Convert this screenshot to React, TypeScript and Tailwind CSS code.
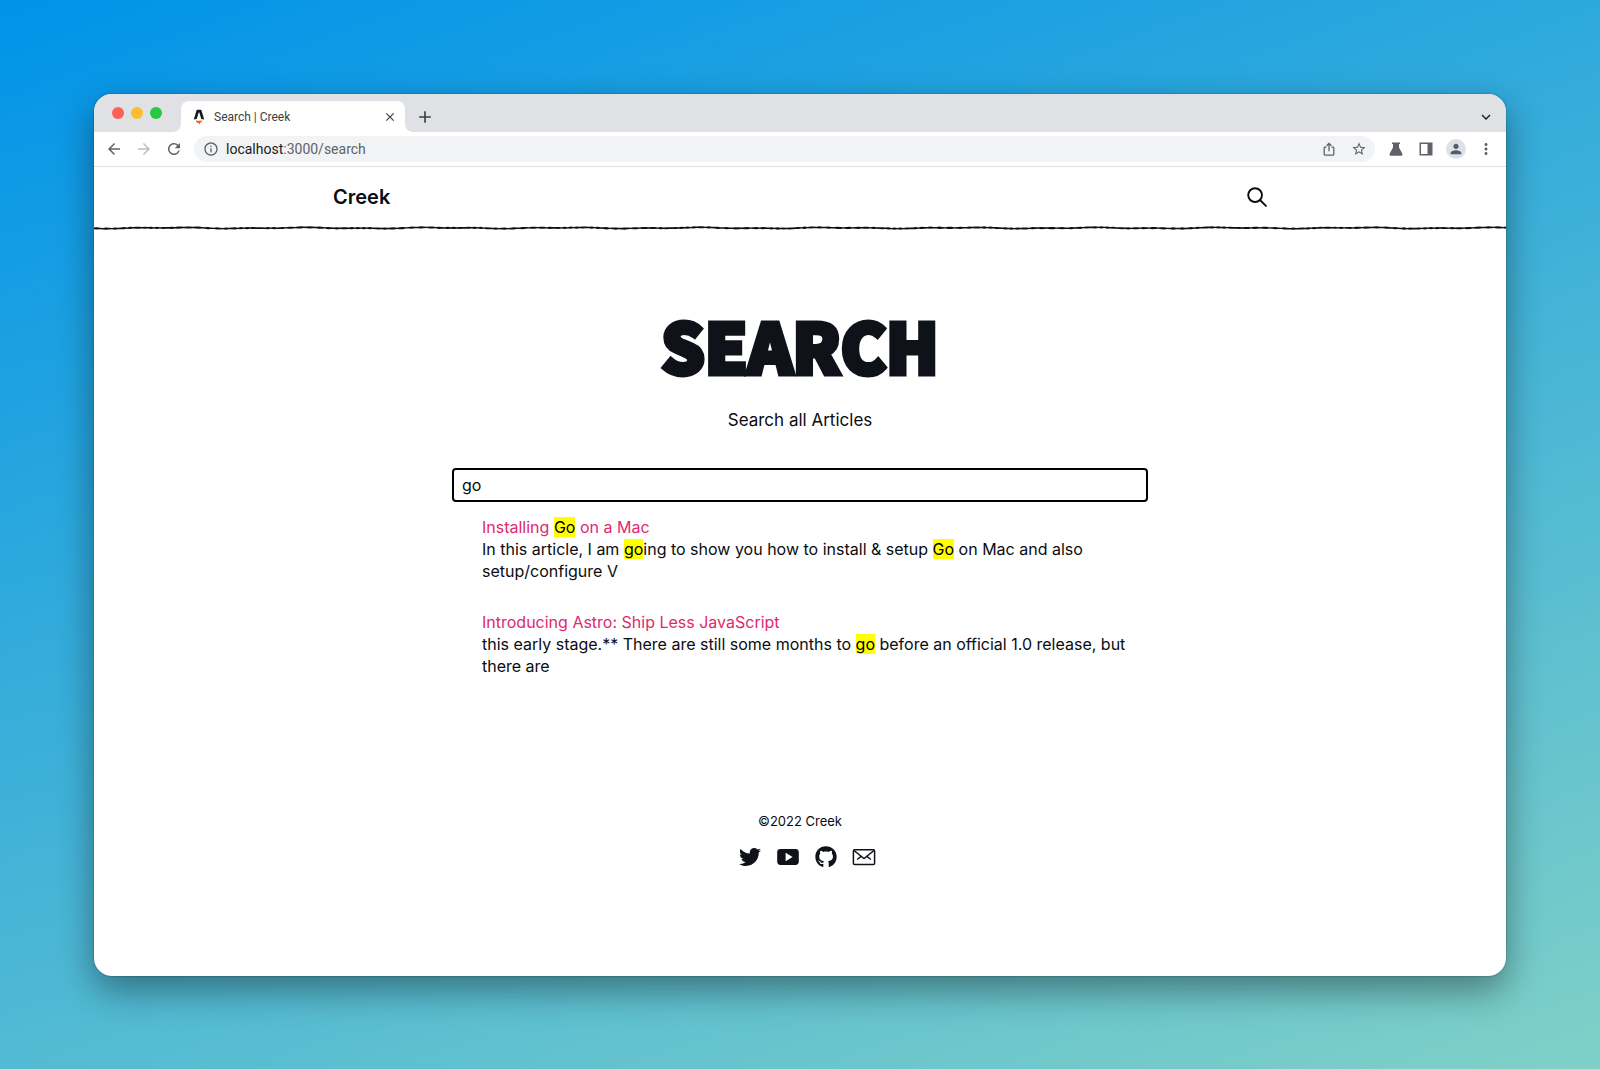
import type { ReactNode } from 'react'
import {
  MdArrowBack,
  MdArrowForward,
  MdRefresh,
  MdInfoOutline,
  MdStarBorder,
  MdPerson,
  MdMoreVert,
  MdClose,
  MdAdd,
  MdKeyboardArrowDown,
} from 'react-icons/md'
import { FaTwitter, FaGithub } from 'react-icons/fa'

function AstroLogo() {
  return (
    <svg viewBox="0 0 12 16" className="h-4 w-3" aria-hidden="true">
      <path
        fill="#17191e"
        d="M4.3 0.8h3.4c.5 0 .7.2.8.6L11.2 10.600c-1-.4-1.900-.6-2.900-.7L6.300 3.600c-.1-.3-.5-.3-.6 0L3.700 9.900c-1 .1-1.900.3-2.900.7L3.500 1.400c.1-.4.3-.6.8-.6z"
      />
      <path
        fill="#ff5d01"
        d="M3 11.300c1.700.7 4.300.7 6 0 .1 1.300-.5 1.800-1.300 2.300-.7.500-.9.800-1 1.700-.7-.3-.9-.8-.9-1.500-.3.500-.8.600-1.300.5 0-.5-.1-.7-.5-1-.7-.4-1.100-1-1-2z"
      />
    </svg>
  )
}

function ShareIcon() {
  return (
    <svg viewBox="0 0 16 16" className="size-4" fill="none" stroke="#5f6368" strokeWidth="1.3" aria-hidden="true">
      <path d="M5.500 6.200H4c-.5 0-.8.3-.8.8v6.300c0 .5.3.8.8.8h8c.5 0 .8-.3.8-.8V7c0-.5-.3-.8-.8-.8h-1.500M8 10.200V2.600M5.600 4.800 8 2.400l2.400 2.400" />
    </svg>
  )
}

function FlaskIcon() {
  return (
    <svg viewBox="0 0 16 16" className="size-4" fill="#5f6368" aria-hidden="true">
      <path d="M4 1.500h8v1.600h-1v3.400l3.400 6.300c.500.900-.1 1.900-1.100 1.900H2.700c-1 0-1.600-1-1.100-1.900L5 6.500V3.100H4z" />
    </svg>
  )
}

function SidePanelIcon() {
  return (
    <svg viewBox="0 0 16 16" className="size-4" aria-hidden="true">
      <path fill="#5f6368" fillRule="evenodd" d="M1.500 1.500h13v13h-13zM3 3v10h6.500V3z" />
    </svg>
  )
}

function SearchIcon() {
  return (
    <svg viewBox="0 0 20 20" className="size-5" fill="none" stroke="#0a0c10" strokeWidth="1.900" aria-hidden="true">
      <circle cx="8.100" cy="8.100" r="6.900" />
      <path d="m13 13 5.900 5.900" strokeLinecap="round" />
    </svg>
  )
}

function YoutubeIcon() {
  return (
    <svg viewBox="0 0 24 24" className="size-6" aria-hidden="true">
      <path
        fill="#0f1219"
        fillRule="evenodd"
        d="M4.500 4h15c2 0 3.300 1.200 3.300 3.200v9.600c0 2-1.300 3.200-3.300 3.200h-15c-2 0-3.300-1.200-3.300-3.200V7.200c0-2 1.300-3.200 3.300-3.200zM9.600 7.700v8.600l7-4.300z"
      />
    </svg>
  )
}

function MailIcon() {
  return (
    <svg viewBox="0 0 24 24" className="size-6" fill="none" stroke="#0f1219" strokeWidth="1.500" aria-hidden="true">
      <rect x="1.400" y="4.700" width="21.200" height="14.800" rx="1.300" />
      <path d="m2 5.500 10 8 10-8M5.200 14.500l4.200-3.300M18.800 14.500l-4.200-3.300" />
    </svg>
  )
}

function TabFoot({ className }: { className: string }) {
  return (
    <svg viewBox="0 0 8 8" className={className} aria-hidden="true">
      <path d="M8 0v8H0c4.400 0 8-3.600 8-8z" fill="#ffffff" />
    </svg>
  )
}

const ROUGH_WIDTH = 1413

function roughLine(): string {
  const upper: string[] = []
  const lower: string[] = []
  for (let x = 0; x <= ROUGH_WIDTH; x += 3) {
    const wave = Math.sin(x / 9) * 0.3 + Math.sin(x / 21 + 1) * 0.4
    const jag = Math.sin(x * 1.3 + Math.sin(x / 17) * 3) * 0.25
    upper.push(`${x},${(2.1 + wave + jag).toFixed(2)}`)
    lower.unshift(`${x},${(3.9 + wave - jag).toFixed(2)}`)
  }
  return `M${upper.join('L')}L${lower.join('L')}Z`
}

function RoughDivider() {
  return (
    <svg
      viewBox={`0 0 ${ROUGH_WIDTH} 6`}
      preserveAspectRatio="none"
      className="block h-[6px] w-full"
      aria-hidden="true"
    >
      <path d={roughLine()} fill="#0d0f14" />
    </svg>
  )
}

function Hit({ children }: { children: ReactNode }) {
  return <mark className="bg-[#ffff00] text-black">{children}</mark>
}

function IconButton({ label, children }: { label: string; children: ReactNode }) {
  return (
    <button type="button" aria-label={label} className="flex size-[30px] items-center justify-center">
      {children}
    </button>
  )
}

function BrowserChrome() {
  return (
    <div className="font-[Roboto,sans-serif]">
      <div className="flex h-[38px] items-end bg-[#dfe1e5] pl-[18px] pr-[9px]">
        <div className="flex h-[38px] w-[61px] items-center gap-[7px]">
          <span className="size-3 rounded-full bg-[#fe5f57]" />
          <span className="size-3 rounded-full bg-[#febc2e]" />
          <span className="size-3 rounded-full bg-[#28c840]" />
        </div>
        <TabFoot className="size-2" />
        <div className="flex h-[31px] w-[224px] items-center rounded-t-lg bg-white pl-3 pr-2">
          <AstroLogo />
          <span className="ml-[9px] flex-1 text-[12px] text-[#3c4043]">Search | Creek</span>
          <button type="button" aria-label="Close tab" className="text-[#3c4043]">
            <MdClose className="size-[14px]" />
          </button>
        </div>
        <TabFoot className="size-2 -scale-x-100" />
        <button type="button" aria-label="New tab" className="ml-[2px] flex h-[31px] items-center text-[#3c4043]">
          <MdAdd className="size-[20px]" />
        </button>
        <button type="button" aria-label="Search tabs" className="ml-auto flex h-[31px] w-5 items-center text-[#202124]">
          <MdKeyboardArrowDown className="size-[18px]" />
        </button>
      </div>
      <div className="flex h-[35px] items-center border-b border-[#dddfe2] bg-white px-[5px] text-[#5f6368]">
        <IconButton label="Back">
          <MdArrowBack className="size-[18px]" />
        </IconButton>
        <IconButton label="Forward">
          <MdArrowForward className="size-[18px] text-[#bcbec1]" />
        </IconButton>
        <IconButton label="Reload">
          <MdRefresh className="size-[18px]" />
        </IconButton>
        <div className="ml-[5px] flex h-[26px] flex-1 items-center rounded-full bg-[#f1f3f4] pl-[9px] pr-px">
          <MdInfoOutline className="size-4" />
          <a href="#url" className="ml-[7px] flex-1 text-[14px] leading-[20px] text-[#5f6368]">
            <span className="text-[#202124]">localhost</span>:3000/search
          </a>
          <IconButton label="Share">
            <ShareIcon />
          </IconButton>
          <IconButton label="Bookmark">
            <MdStarBorder className="size-4" />
          </IconButton>
        </div>
        <div className="ml-[6px] flex">
          <IconButton label="Labs">
            <FlaskIcon />
          </IconButton>
          <IconButton label="Side panel">
            <SidePanelIcon />
          </IconButton>
          <IconButton label="Profile">
            <span className="flex size-5 items-center justify-center rounded-full bg-[#dfe1e6] text-[#565b73]">
              <MdPerson className="size-4" />
            </span>
          </IconButton>
          <IconButton label="More">
            <MdMoreVert className="size-[18px]" />
          </IconButton>
        </div>
      </div>
    </div>
  )
}

function Result({ title, children }: { title: ReactNode; children: ReactNode }) {
  return (
    <li>
      <a href="#article" className="text-[#e0296e]">
        {title}
      </a>
      <p>{children}</p>
    </li>
  )
}

export default function App() {
  return (
    <div className="flex min-h-screen flex-col bg-[linear-gradient(160deg,#0093e9_0%,#80d0c7_100%)] px-[94px] pb-[93px] pt-[94px]">
      <div className="flex flex-1 flex-col overflow-hidden rounded-[18px] bg-white shadow-[0_0_2px_rgba(0,0,0,0.4),0_14px_36px_rgba(0,0,0,0.4)]">
        <BrowserChrome />
        <div className="flex flex-1 flex-col text-[16px] leading-[22px] text-[#0a0c10] font-[Inter,sans-serif]">
          <header>
            <div className="mx-auto flex h-[58px] max-w-[934px] items-center justify-between pt-[2px]">
              <a href="#home" className="text-[20px] font-semibold">
                Creek
              </a>
              <button type="button" aria-label="Search">
                <SearchIcon />
              </button>
            </div>
            <RoughDivider />
          </header>
          <main className="mx-auto w-full max-w-[696px]">
            <h1 className="pt-[72px] text-center text-[68px] leading-[84px] font-black text-[#0f1219] font-['Noto_Sans_CJK_JP',sans-serif] [-webkit-text-stroke:5px_#0f1219]">
              SEARCH
            </h1>
            <p className="mt-[22px] text-center text-[17px] leading-[22px]">Search all Articles</p>
            <input
              type="text"
              aria-label="Search all articles"
              defaultValue="go"
              className="mt-[37px] block h-[34px] w-full rounded-[4px] border-2 border-black bg-white px-[8px] outline-none"
            />
            <ul className="mt-[14px] flex flex-col gap-[29px] pl-[30px]">
              <Result
                title={
                  <>
                    Installing <Hit>Go</Hit> on a Mac
                  </>
                }
              >
                In this article, I am <Hit>go</Hit>ing to show you how to install &amp; setup <Hit>Go</Hit> on Mac and
                also
                <br />
                setup/configure V
              </Result>
              <Result title="Introducing Astro: Ship Less JavaScript">
                this early stage.** There are still some months to <Hit>go</Hit> before an official 1.0 release, but
                <br />
                there are
              </Result>
            </ul>
          </main>
          <footer className="mt-[134px] flex flex-col items-center">
            <p className="text-[13px] leading-[20px]">©2022 Creek</p>
            <div className="mt-[14px] flex text-[#0f1219]">
              <a href="#twitter" aria-label="Twitter" className="ml-[14px]">
                <FaTwitter className="size-6 p-px" />
              </a>
              <a href="#youtube" aria-label="YouTube" className="ml-[14px]">
                <YoutubeIcon />
              </a>
              <a href="#github" aria-label="GitHub" className="ml-[14px]">
                <FaGithub className="size-6 p-px" />
              </a>
              <a href="#mail" aria-label="Email" className="ml-[14px]">
                <MailIcon />
              </a>
            </div>
          </footer>
        </div>
      </div>
    </div>
  )
}
